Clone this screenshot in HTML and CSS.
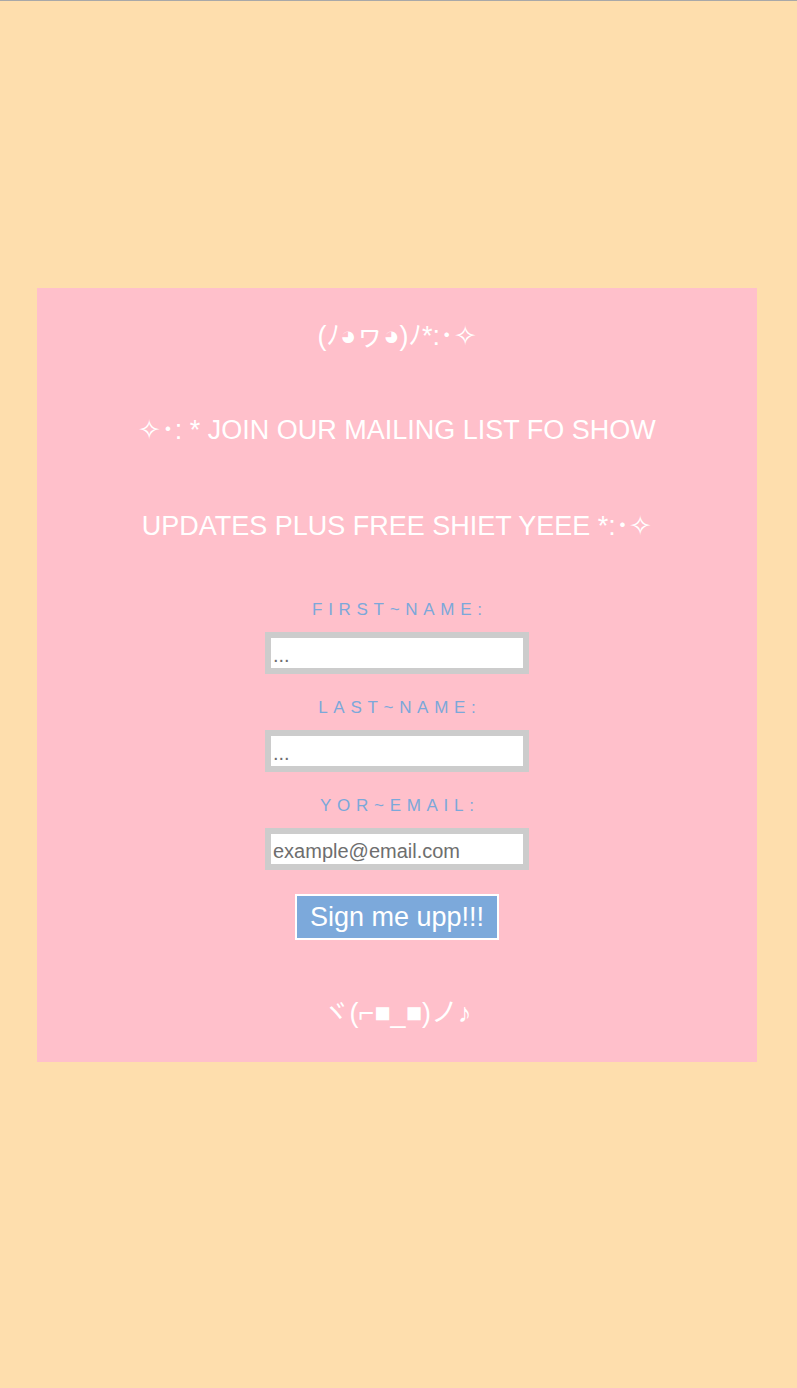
FILE: index.html
```html
<!DOCTYPE html>
<html lang="en">
<head>
<meta charset="utf-8">
<title>Mailing list</title>
<link rel="stylesheet" href="styles.css">
</head>
<body>
<div class="page">
  <section class="card">
    <p class="emo">(ﾉ◕ヮ◕)ﾉ*:･✧</p>
    <h2 class="headline">✧･: * JOIN OUR MAILING LIST FO SHOW<br>UPDATES PLUS FREE SHIET YEEE *:･✧</h2>
    <form class="signup">
      <label class="label" for="fn">FIRST~NAME:</label>
      <input class="field" id="fn" type="text" placeholder="...">
      <label class="label" for="ln">LAST~NAME:</label>
      <input class="field" id="ln" type="text" placeholder="...">
      <label class="label" for="em">YOR~EMAIL:</label>
      <input class="field" id="em" type="email" placeholder="example@email.com">
      <button class="btn" type="button">Sign me upp!!!</button>
    </form>
    <p class="emo emo-bottom">ヾ(⌐■_■)ノ♪</p>
  </section>
</div>
</body>
</html>
```

FILE: styles.css
```css
html, body {
  margin: 0;
  padding: 0;
}
body {
  background: #fedead;
  border-top: 1px solid #a8a8a8;
  min-height: 1387px;
  font-family: "Liberation Sans", Arial, "Noto Sans CJK JP", sans-serif;
}
.page {
  padding-top: 287px;
  padding-left: 37px;
}
.card {
  width: 720px;
  background: #ffc0cb;
  color: #ffffff;
  text-align: center;
  padding: 35px 0 35px;
  display: flex;
  flex-direction: column;
  align-items: center;
}
.emo {
  margin: 0;
  font-size: 27px;
  line-height: 27px;
}
.headline {
  margin: 32px 0 0;
  font-size: 27px;
  font-weight: normal;
  line-height: 96px;
}
.signup {
  display: flex;
  flex-direction: column;
  align-items: center;
  margin-top: 25px;
}
.label {
  font-size: 17px;
  line-height: 21px;
  letter-spacing: 5.7px;
  color: #7ba8da;
  margin-right: -5.7px;
}
.field {
  box-sizing: border-box;
  width: 264px;
  height: 42px;
  margin: 12px 0 23px;
  border: 6px solid #cccccc;
  background: #ffffff;
  padding: 4px 2px 0;
  font-family: "Liberation Sans", Arial, sans-serif;
  font-size: 20px;
  color: #666666;
  outline: none;
}
.field::placeholder {
  color: #6e6e6e;
  opacity: 1;
}
.signup .field:last-of-type {
  margin-bottom: 24px;
}
.btn {
  box-sizing: border-box;
  width: 204px;
  height: 46px;
  background: #7ca9db;
  border: 2px solid #ffffff;
  color: #ffffff;
  font-family: "Liberation Sans", Arial, sans-serif;
  font-size: 27px;
  padding: 0;
  cursor: pointer;
}
.emo-bottom {
  margin-top: 60px;
}
```
